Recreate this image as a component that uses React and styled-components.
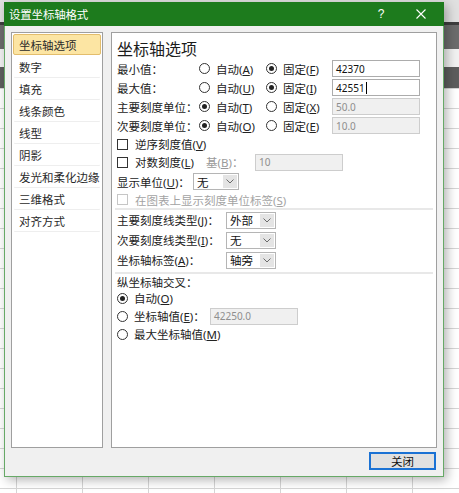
import styled, { createGlobalStyle } from "styled-components";

const Global = createGlobalStyle`
  html, body { margin: 0; padding: 0; }
  body { font-family: "Noto Sans", "Noto Sans CJK SC", sans-serif; color: #222; }
`;

export default function App() {
  const menu = ["坐标轴选项", "数字", "填充", "线条颜色", "线型", "阴影", "发光和柔化边缘", "三维格式", "对齐方式"];
  return (
    <Screen>
      <Global />
      <Dialog>
        <TitleBar>
          <Title>设置坐标轴格式</Title>
          <TitleBtn>?</TitleBtn>
          <TitleBtn>
            <svg width="10" height="10" viewBox="0 0 10 10">
              <path d="M0.5 0.5 L9.5 9.5 M9.5 0.5 L0.5 9.5" stroke="#fff" strokeWidth="1.1" />
            </svg>
          </TitleBtn>
        </TitleBar>
        <Body>
          <Panels>
            <Menu>
              {menu.map((m, i) => (
                <MenuItem key={m} $active={i === 0}>{m}</MenuItem>
              ))}
            </Menu>
            <Content>
              <Heading>坐标轴选项</Heading>
              <TopGrid>
                <Label>最小值：</Label>
                <Opt><Radio /><span>自动(<Key>A</Key>)</span></Opt>
                <Opt><Radio $on /><span>固定(<Key>F</Key>)</span></Opt>
                <Field>42370</Field>

                <Label>最大值：</Label>
                <Opt><Radio /><span>自动(<Key>U</Key>)</span></Opt>
                <Opt><Radio $on /><span>固定(<Key>I</Key>)</span></Opt>
                <Field>42551<Caret /></Field>

                <Label>主要刻度单位：</Label>
                <Opt><Radio $on /><span>自动(<Key>T</Key>)</span></Opt>
                <Opt><Radio /><span>固定(<Key>X</Key>)</span></Opt>
                <Field $off>50.0</Field>

                <Label>次要刻度单位：</Label>
                <Opt><Radio $on /><span>自动(<Key>O</Key>)</span></Opt>
                <Opt><Radio /><span>固定(<Key>E</Key>)</span></Opt>
                <Field $off>10.0</Field>
              </TopGrid>

              <CheckRow><Check /><span>逆序刻度值(<Key>V</Key>)</span></CheckRow>
              <CheckRow>
                <CheckPart><Check /><span>对数刻度(<Key>L</Key>)</span></CheckPart>
                <BaseLabel>基(<Key>B</Key>)：</BaseLabel>
                <Field $off>10</Field>
              </CheckRow>
              <UnitRow>
                <Label $w={76}>显示单位(<Key>U</Key>)：</Label>
                <Select $w={46} value="无" />
              </UnitRow>
              <CheckRow $h={15} $off><Check $off /><span>在图表上显示刻度单位标签(<Key>S</Key>)</span></CheckRow>

              <Divider />

              <SelectGrid>
                <Label>主要刻度线类型(<Key>J</Key>)：</Label>
                <Select value="外部" />
                <Label>次要刻度线类型(<Key>I</Key>)：</Label>
                <Select value="无" />
                <Label>坐标轴标签(<Key>A</Key>)：</Label>
                <Select value="轴旁" />
              </SelectGrid>

              <Divider $top={2} />

              <Caption>纵坐标轴交叉：</Caption>
              <CrossRow><Opt><Radio $on /><span>自动(<Key>O</Key>)</span></Opt></CrossRow>
              <CrossRow>
                <Opt $w={93}><Radio /><span>坐标轴值(<Key>E</Key>)：</span></Opt>
                <Field $off>42250.0</Field>
              </CrossRow>
              <CrossRow><Opt><Radio /><span>最大坐标轴值(<Key>M</Key>)</span></Opt></CrossRow>
            </Content>
          </Panels>
          <Footer>
            <CloseButton>关闭</CloseButton>
          </Footer>
        </Body>
      </Dialog>
    </Screen>
  );
}

function Select({ value, $w }) {
  return (
    <SelectBox $w={$w}>
      <SelectText>{value}</SelectText>
      <DropBtn>
        <svg width="8" height="5" viewBox="0 0 8 5">
          <polyline points="0.5,0.5 4,4 7.5,0.5" fill="none" stroke="#6a6a6a" strokeWidth="1" />
        </svg>
      </DropBtn>
    </SelectBox>
  );
}

const Screen = styled.div`
  width: 459px;
  height: 493px;
  overflow: hidden;
  box-sizing: border-box;
  padding: 2px 0 0 4px;
  background-color: #fff;
  background-image:
    linear-gradient(to bottom, #e0e0e0 0 22px, #3e3e3e 22px 25px, #6c6c6c 25px 49px, #f1f1f1 49px 67px, #5d5d5d 67px 88px, transparent 88px),
    linear-gradient(to right, #d5d5d5 1px, transparent 1px),
    linear-gradient(to bottom, #d5d5d5 1px, transparent 1px);
  background-size: 100% 100%, 66px 100%, 100% 20px;
  background-position: 0 0, 16px 0, 0 8px;
`;
const Dialog = styled.div`
  width: 440px;
  height: 475px;
  box-sizing: border-box;
  border: 1px solid #67a967;
  border-top: none;
  background: #f0f0f0;
  display: flex;
  flex-direction: column;
  box-shadow: 3px 3px 10px rgba(0, 0, 0, 0.3);
`;
const TitleBar = styled.div`
  height: 24px;
  flex: none;
  margin: 0 -1px;
  padding-left: 5px;
  padding-right: 9px;
  background: #1d7b1d;
  color: #fff;
  display: flex;
  align-items: center;
`;
const Title = styled.div`
  font-size: 11.5px;
  flex: 1;
  letter-spacing: -0.2px;
`;
const TitleBtn = styled.div`
  width: 28px;
  height: 24px;
  margin-left: 12px;
  display: flex;
  align-items: center;
  justify-content: center;
  font-family: "Liberation Sans", sans-serif;
  font-size: 12px;
  &:first-of-type { margin-left: 0; }
`;
const Body = styled.div`
  flex: 1;
  display: flex;
  flex-direction: column;
  gap: 4px;
  padding: 6px;
`;
const Panels = styled.div`
  display: flex;
  gap: 8px;
  height: 416px;
`;
const Menu = styled.div`
  width: 92px;
  box-sizing: border-box;
  border: 1px solid #9f9f9f;
  background: #fff;
`;
const MenuItem = styled.div`
  height: 21px;
  margin: 1px;
  box-sizing: border-box;
  padding-left: 5px;
  display: flex;
  align-items: center;
  font-size: 11.5px;
  color: #2a2a2a;
  border: 1px solid ${(p) => (p.$active ? "#e3bd6c" : "transparent")};
  border-radius: 2px;
  background: ${(p) => (p.$active ? "#fce5a3" : "transparent")};
  box-shadow: ${(p) => (p.$active ? "none" : "0 2px 0 -1px #eeeeee")};
`;
const Content = styled.div`
  flex: 1;
  box-sizing: border-box;
  border: 1px solid #9f9f9f;
  background: #fff;
  padding: 6px 5px 0 5px;
  font-size: 11.5px;
  color: #222;
`;
const Heading = styled.div`
  height: 20px;
  font-size: 16px;
  line-height: 20px;
  color: #1c1c1c;
`;
const TopGrid = styled.div`
  display: grid;
  grid-template-columns: 82px 67px 66px 88px;
  grid-auto-rows: 19px;
  align-items: center;
`;
const Label = styled.div`
  white-space: nowrap;
  ${(p) => p.$w && `width: ${p.$w}px; flex: none;`}
`;
const Key = styled.span`
  text-decoration: underline;
  text-underline-offset: 1px;
`;
const Opt = styled.div`
  display: flex;
  align-items: center;
  gap: 6px;
  white-space: nowrap;
  ${(p) => p.$w && `width: ${p.$w}px; flex: none;`}
`;
const Radio = styled.span`
  width: 11px;
  height: 11px;
  flex: none;
  box-sizing: border-box;
  border: 1px solid #333;
  border-radius: 50%;
  background: #fff;
  display: flex;
  align-items: center;
  justify-content: center;
  &::after {
    content: "";
    width: 5px;
    height: 5px;
    border-radius: 50%;
    background: ${(p) => (p.$on ? "#222" : "transparent")};
  }
`;
const Field = styled.div`
  height: 17px;
  box-sizing: border-box;
  border: 1px solid ${(p) => (p.$off ? "#cdcdcd" : "#acacac")};
  background: ${(p) => (p.$off ? "#f0f0f0" : "#fff")};
  color: ${(p) => (p.$off ? "#8e8e8e" : "#111")};
  font-size: 10px;
  padding-left: 3px;
  display: flex;
  align-items: center;
  width: 88px;
  flex: none;
`;
const Caret = styled.span`
  width: 1px;
  height: 12px;
  background: #000;
  margin-left: 1px;
`;
const CheckRow = styled.div`
  height: ${(p) => p.$h || 18}px;
  display: flex;
  align-items: center;
  gap: 7px;
  white-space: nowrap;
  color: ${(p) => (p.$off ? "#a3a3a3" : "inherit")};
`;
const CheckPart = styled.div`
  width: 89px;
  display: flex;
  align-items: center;
  gap: 7px;
  margin-right: -7px;
`;
const Check = styled.span`
  width: 11px;
  height: 11px;
  flex: none;
  box-sizing: border-box;
  border: 1px solid ${(p) => (p.$off ? "#c6c6c6" : "#333")};
  background: #fff;
`;
const BaseLabel = styled.div`
  width: 42px;
  color: #9a9a9a;
`;
const UnitRow = styled.div`
  height: 21px;
  display: flex;
  align-items: center;
`;
const SelectBox = styled.div`
  width: ${(p) => p.$w || 50}px;
  height: 17px;
  box-sizing: border-box;
  border: 1px solid #b5b5b5;
  background: #fff;
  display: flex;
  align-items: stretch;
`;
const SelectText = styled.div`
  flex: 1;
  padding-left: 3px;
  display: flex;
  align-items: center;
  color: #111;
`;
const DropBtn = styled.div`
  width: 14px;
  margin: 1px;
  background: #e4e4e4;
  display: flex;
  align-items: center;
  justify-content: center;
`;
const Divider = styled.div`
  height: 2px;
  background: #e8e8e8;
  margin: ${(p) => p.$top || 1}px -2px 0;
`;
const SelectGrid = styled.div`
  display: grid;
  grid-template-columns: 109px 50px;
  grid-auto-rows: 20px;
  align-items: center;
`;
const Caption = styled.div`
  height: 15px;
  display: flex;
  align-items: center;
`;
const CrossRow = styled.div`
  height: 18px;
  display: flex;
  align-items: center;
`;
const Footer = styled.div`
  display: flex;
  justify-content: flex-end;
`;
const CloseButton = styled.div`
  width: 67px;
  height: 18px;
  margin-right: 1px;
  box-sizing: border-box;
  border: 2px solid #1b72d4;
  background: #e1e1e1;
  display: flex;
  align-items: center;
  justify-content: center;
  font-size: 11.5px;
  color: #111;
`;
